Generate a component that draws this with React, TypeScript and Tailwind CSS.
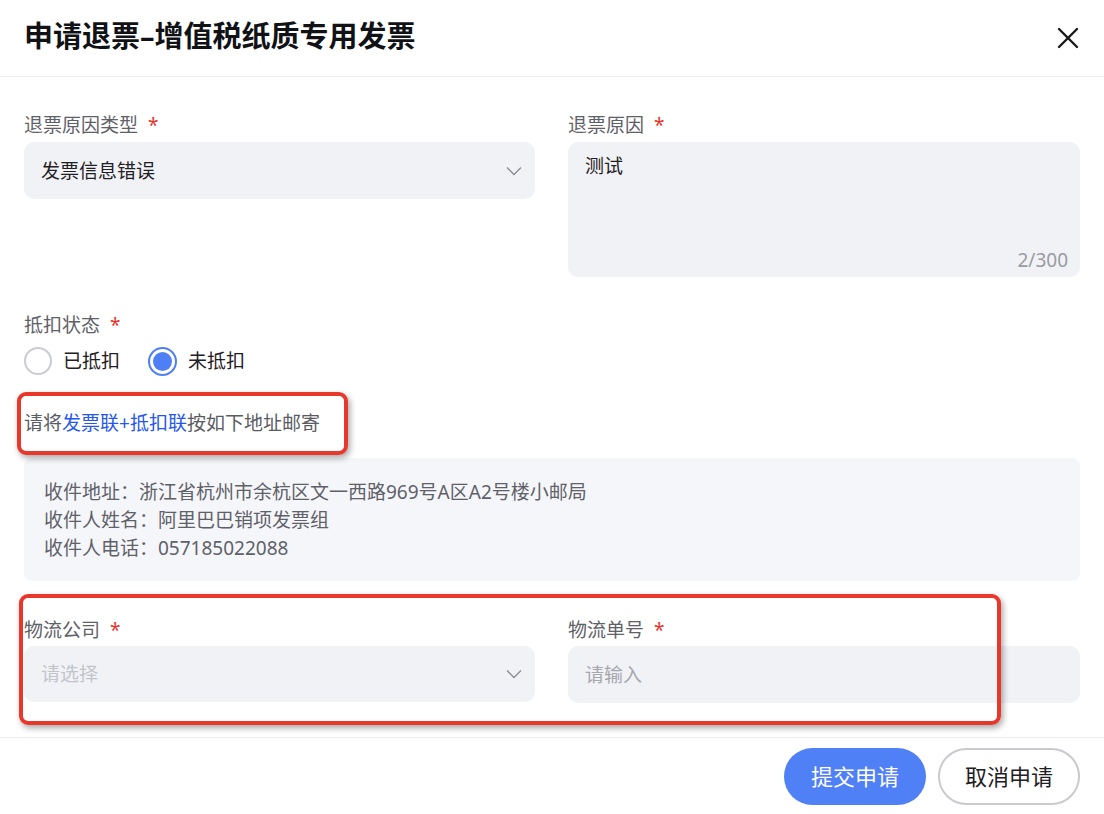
import React from "react";

const FONT = { fontFamily: '"Noto Sans", "Noto Sans CJK SC", sans-serif' };

function Chevron() {
  return (
    <svg width="16" height="10" viewBox="0 0 16 10" fill="none">
      <polyline points="1,1.5 8,8.5 15,1.5" stroke="#8a8d96" strokeWidth="1.3" fill="none" />
    </svg>
  );
}

function Label({ children }: { children: React.ReactNode }) {
  return (
    <div className="h-[28px] leading-[28px] text-[19px] text-[#5f6168] flex items-center">
      <span>{children}</span>
      <span className="ml-[10px] text-[#e8332a] text-[19px]">*</span>
    </div>
  );
}

function Radio({ checked, label }: { checked?: boolean; label: string }) {
  return (
    <div className="flex items-center h-[28px]">
      {checked ? (
        <span className="w-[29px] h-[29px] rounded-full border-[2px] border-[#4f7ff5] flex items-center justify-center bg-white">
          <span className="w-[19px] h-[19px] rounded-full bg-[#4f7ff5]" />
        </span>
      ) : (
        <span className="w-[28px] h-[28px] rounded-full border-[2px] border-[#cbccd3] bg-white" />
      )}
      <span className="ml-[11px] text-[19px] text-[#1f2024]">{label}</span>
    </div>
  );
}

export default function App() {
  return (
    <div className="relative w-[1104px] h-[814px] bg-white overflow-hidden" style={FONT}>
      {/* header */}
      <div className="h-[77px] border-b border-[#ececf1] flex items-center justify-between px-[24px]">
        <div className="text-[29px] font-bold text-[#111216] leading-none mb-[5px]">申请退票–增值税纸质专用发票</div>
        <svg width="22" height="22" viewBox="0 0 22 22" className="mr-[1px]">
          <line x1="2" y1="2" x2="20" y2="20" stroke="#1a1a1a" strokeWidth="2.4" strokeLinecap="round" />
          <line x1="20" y1="2" x2="2" y2="20" stroke="#1a1a1a" strokeWidth="2.4" strokeLinecap="round" />
        </svg>
      </div>

      {/* body */}
      <div className="px-[24px] pt-[34px]">
        <div className="grid grid-cols-[511px_512px] gap-x-[33px]">
          <div>
            <Label>退票原因类型</Label>
            <div className="mt-[3px] h-[57px] rounded-[10px] bg-[#f1f2f6] flex items-center justify-between pl-[17px] pr-[13px]">
              <span className="text-[19px] text-[#1f2024] pt-[2px]">发票信息错误</span>
              <Chevron />
            </div>
          </div>
          <div>
            <Label>退票原因</Label>
            <div className="mt-[3px] h-[135px] rounded-[10px] bg-[#f1f2f6] relative pl-[17px] pt-[10px]">
              <span className="text-[19px] text-[#1f2024] leading-[28px]">测试</span>
              <span className="absolute right-[12px] bottom-[3px] text-[19px] text-[#9a9ba1] leading-[28px]">2/300</span>
            </div>
          </div>
        </div>

        <div className="mt-[34px]">
          <Label>抵扣状态</Label>
          <div className="mt-[8px] flex items-center gap-[28px]">
            <Radio label="已抵扣" />
            <Radio checked label="未抵扣" />
          </div>
        </div>

        <div className="mt-[34px] h-[28px] leading-[28px] text-[19px] text-[#5a5c63]">
          请将<span className="text-[#2456f0]">发票联+抵扣联</span>按如下地址邮寄
        </div>

        <div className="mt-[21px] h-[123px] rounded-[8px] bg-[#f5f6fa] pl-[20px] pt-[20px] text-[19px] leading-[28px] text-[#5f6168]">
          <div>收件地址：浙江省杭州市余杭区文一西路969号A区A2号楼小邮局</div>
          <div>收件人姓名：阿里巴巴销项发票组</div>
          <div>收件人电话：057185022088</div>
        </div>

        <div className="mt-[35px] grid grid-cols-[511px_512px] gap-x-[33px]">
          <div>
            <Label>物流公司</Label>
            <div className="mt-[2px] h-[56px] rounded-[10px] bg-[#f1f2f6] flex items-center justify-between pl-[17px] pr-[13px]">
              <span className="text-[19px] text-[#c2c4ca]">请选择</span>
              <Chevron />
            </div>
          </div>
          <div>
            <Label>物流单号</Label>
            <div className="mt-[2px] h-[57px] rounded-[10px] bg-[#f1f2f6] flex items-center pl-[17px]">
              <span className="text-[19px] text-[#a5a7ad] pt-[2px]">请输入</span>
            </div>
          </div>
        </div>
      </div>

      {/* footer */}
      <div className="mt-[34px] border-t border-[#ececf1] pt-[10px] px-[24px] flex justify-end gap-[12px]">
        <button className="w-[142px] h-[57px] rounded-full bg-[#4f80f6] text-white text-[22px]">提交申请</button>
        <button className="w-[142px] h-[57px] rounded-full bg-white border-[2px] border-[#c9cad0] text-[#1f2024] text-[22px]">取消申请</button>
      </div>

      {/* annotation boxes */}
      <div className="absolute left-[17px] top-[392px] w-[331px] h-[63px] rounded-[9px] border-[4px] border-[#e8372b] shadow-[2px_3px_6px_rgba(0,0,0,0.35)] pointer-events-none" />
      <div className="absolute left-[19px] top-[594px] w-[982px] h-[131px] rounded-[9px] border-[4px] border-[#e8372b] shadow-[2px_3px_6px_rgba(0,0,0,0.35)] pointer-events-none" />
    </div>
  );
}
